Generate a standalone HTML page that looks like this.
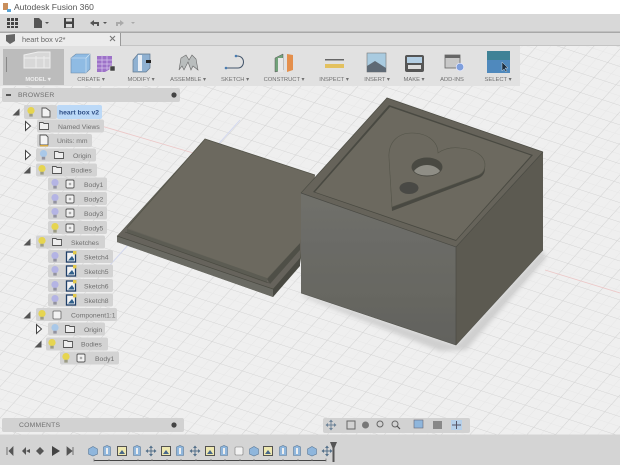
<!DOCTYPE html>
<html><head><meta charset="utf-8"><style>
html,body{margin:0;padding:0;width:620px;height:465px;overflow:hidden;background:#eee}
svg{display:block;font-family:"Liberation Sans",sans-serif;filter:blur(.35px)}
.r{fill:#d3d3d3}
.t{font-size:6.8px;fill:#707070}
.l{font-size:5.8px;fill:#707070;text-anchor:middle}
</style></head><body>
<svg width="620" height="465" viewBox="0 0 620 465" xmlns="http://www.w3.org/2000/svg">
<defs>
<pattern id="g" patternUnits="userSpaceOnUse" width="20" height="20" patternTransform="matrix(1.1 .36 .68 -.75 6 2)">
<path d="M10 0V20M0 10H20" stroke="#e6e6e6" stroke-width=".5" fill="none"/>
<path d="M0 0V20M0 0H20" stroke="#d2d2d2" stroke-width="1" fill="none"/>
</pattern>
<filter id="b"><feGaussianBlur stdDeviation="2.500"/></filter>
<filter id="s"><feGaussianBlur stdDeviation=".3"/></filter>
<linearGradient id="lf" x1="0" y1="0" x2="0" y2="1"><stop offset="0" stop-color="#70706b"/><stop offset="1" stop-color="#62625d"/></linearGradient>
<g id="on"><circle cx="0" cy="-1.4" r="3.600" fill="#e6d550"/><rect x="-1.700" y="1.800" width="3.400" height="2.800" fill="#9c9c84"/></g>
<g id="off"><circle cx="0" cy="-1.4" r="3.600" fill="#b4b4e4"/><rect x="-1.700" y="1.800" width="3.400" height="2.800" fill="#92929f"/></g>
<g id="dim"><circle cx="0" cy="-1.4" r="3.600" fill="#a9c8e8"/><rect x="-1.700" y="1.800" width="3.400" height="2.800" fill="#92929f"/></g>
<g id="fo"><path d="M-4.500 -3.500H-1L0 -2.500H4.500V3.500H-4.500Z" fill="#eee" stroke="#555" stroke-width=".9"/></g>
<g id="bo"><rect x="-4" y="-4" width="8" height="8" rx="1.200" fill="#f2f2f2" stroke="#555" stroke-width=".9"/><rect x="-1.200" y="-1.200" width="2.400" height="2.400" fill="#aaa"/></g>
<g id="sk"><rect x="-4.500" y="-5" width="9" height="10" fill="#f4f4f4" stroke="#1f3f68" stroke-width="1.300"/><path d="M-3 3.500L1 -1L3 2V3.500Z" fill="#2f5f8a"/><rect x="2" y="-6" width="3.400" height="3.400" fill="#e2c94a"/></g>
<path id="tri" d="M-3.500 3.500H3.500V-3.500Z" fill="#555"/>
<path id="op" d="M-2.500 -4.500L2.500 0L-2.500 4.500Z" fill="#fff" stroke="#444" stroke-width="1"/>
<g id="tb"><path d="M-3.500 -4L0 -5.500L3.500 -4V4.500H-3.500Z" fill="#8fb6dc" stroke="#5c7a99" stroke-width=".6"/><rect x="-1" y="-3" width="2" height="6" fill="#eee"/></g>
<g id="tm"><path d="M0 -5V5M-5 0H5" stroke="#54708a" stroke-width="1"/><path d="M0 -5.500L-2 -3H2ZM0 5.500L-2 3H2ZM-5.500 0L-3 -2V2ZM5.500 0L3 -2V2Z" fill="#54708a"/></g>
<g id="ts"><rect x="-4.500" y="-4.500" width="9" height="9" fill="#eee8b0" stroke="#444" stroke-width=".9"/><path d="M-3 3L0 -1L3 3Z" fill="#47678a"/></g>
<g id="tc"><path d="M-4.500 -2L0 -4.500L4.500 -2V3L0 5L-4.500 3Z" fill="#8fb6dc" stroke="#5c7a99" stroke-width=".6"/></g>
</defs>

<!-- canvas -->
<rect width="620" height="465" fill="#efefef"/>
<rect width="620" height="465" fill="url(#g)"/>
<path d="M30 105L200 155M545 270L620 293" stroke="#ecc8c8" stroke-width=".9" fill="none"/>
<path d="M110 265L240 120" stroke="#d0d6f0" stroke-width=".9" fill="none"/>

<!-- shadow -->
<path d="M304 297L440 351L466 350L546 258L543 250L456 345L301 293Z" fill="#cfcfcf" filter="url(#b)"/>

<!-- lid -->
<g filter="url(#s)">
<path d="M117 236L205 139L315 175L300 264L273 297L117 242Z" fill="#55554c"/>
<path d="M117 236L127 226L205 139L312 175L300 258L273 289Z" fill="#66645b"/>
<path d="M117 236V242L273 297V289Z" fill="#6b6b64"/>
<path d="M273 289V297L300 266V258Z" fill="#4a4a42"/>
<path d="M117 236L273 289" stroke="#4a4a42" stroke-width=".7" fill="none"/>
<path d="M127 229L267 278V283L127 233Z" fill="#5c5b52"/>
<path d="M125 232L269 283" stroke="#4a4a42" stroke-width=".6" fill="none"/>
<path d="M267 279L300 243V250L270 284Z" fill="#4f4f47"/>
<path d="M127 228L205 139L315 175L300 243L267 278Z" fill="#6c695e"/>
<path d="M127 228L205 139L315 175" stroke="#55554b" stroke-width=".8" fill="none"/>

<!-- box -->
<path d="M301 193L456 247V345L301 293Z" fill="url(#lf)"/>
<path d="M456 247L543 152V250L456 345Z" fill="#5c5a51"/>
<path d="M301 193L387 98L543 152L456 247Z" fill="#66645a"/>
<path d="M313 192L389 105L533 155L456 241Z" fill="#4a4a42"/>
<path d="M315 192L390 107L531 155.500L456 240Z" fill="#6c695e"/>
<path d="M301 193L387 98L543 152" stroke="#4f4f47" stroke-width=".8" fill="none"/>
<path d="M301 193L456 247L543 152M456 247V345" stroke="#4a4a44" stroke-width=".7" fill="none"/>
<path d="M301 293L456 345L543 250" stroke="#55554f" stroke-width=".6" fill="none"/>
<!-- heart -->
<path d="M392 211L389 158C388 142 398 133 412 133C428 133 438 142 438 153C445 148 452 147 460 148C475 149 485 156 485 168C485 173 483 176 479 178Z" fill="#4a4a42"/>
<path d="M392 207L389 158C388 142 398 133 412 133C428 133 438 142 438 153C445 148 452 147 460 148C475 149 485 156 485 165C485 170 483 173 479 175Z" fill="#6c695e" stroke="#55554b" stroke-width=".6"/>
<ellipse cx="427" cy="167" rx="15.500" ry="9.500" fill="#4a4a43"/>
<path d="M414 171C420 163 434 163 440 171C436 177 418 177 414 171Z" fill="#8f8e86"/>
<ellipse cx="409" cy="188" rx="9.500" ry="6" fill="#4a4a44"/>
</g>

<!-- title bar -->
<rect width="620" height="14" fill="#fff"/>
<path d="M3 3H8V10H3Z" fill="#c98f5c"/><path d="M7 9H11V12H7Z" fill="#5aa5d6"/>
<text x="14" y="10" font-size="8.500" fill="#555">Autodesk Fusion 360</text>

<!-- top bar -->
<rect y="14" width="620" height="18" fill="#d8d8d8"/>
<path d="M7 18h3v3h-3zM11 18h3v3h-3zM15 18h3v3h-3zM7 22h3v3h-3zM11 22h3v3h-3zM15 22h3v3h-3zM7 26h3v2h-3zM11 26h3v2h-3zM15 26h3v2h-3z" fill="#444"/>
<path d="M34 18H39L42 21V28H34Z" fill="#555"/><path d="M45 22H49L47 24Z" fill="#555"/>
<path d="M64 18H74V28H64Z" fill="#444"/><rect x="66" y="18.500" width="6" height="3" fill="#ddd"/><rect x="66" y="24" width="6" height="3.500" fill="#ddd"/>
<path d="M90 23L94 20V22H99V26H97V24H94V26Z" fill="#555"/><path d="M103 22H107L105 24Z" fill="#555"/>
<path d="M124 23L120 20V22H116V26H118V24H120V26Z" fill="#aaa"/><path d="M131 22H135L133 24Z" fill="#aaa"/>

<!-- tab row -->
<rect y="31.500" width="620" height="1.500" fill="#a8a8a8"/>
<rect y="33" width="620" height="13" fill="#dcdcdc"/>
<rect x="0" y="45" width="620" height="1" fill="#c4c4c4"/>
<rect y="33" width="120" height="13" fill="#ececec"/>
<rect x="120" y="33" width="1" height="13" fill="#999"/>
<path d="M6 35L15 34V41L10 44L6 41Z" fill="#666"/>
<text x="22" y="42" font-size="7.400" fill="#666">heart box v2*</text>
<path d="M110 36L115 41M115 36L110 41" stroke="#777" stroke-width="1.100"/>

<!-- ribbon -->
<rect y="46" width="520" height="40" fill="#e1e1e1"/>
<rect x="3" y="49" width="61" height="36" fill="#bcbcbc"/>
<rect x="6" y="57" width="1" height="15" fill="#888"/>
<path d="M24 55L38 52H50V68H24Z" fill="#d8d8d8" stroke="#eee"/>
<path d="M36 56V68M44 56V68M24 58H50" stroke="#eee" fill="none"/>
<text class="l" x="38" y="81" style="fill:#eee;font-weight:bold">MODEL ▾</text>

<path d="M71 58L76 54H90V69L86 73H71Z" fill="#8fbbe3" stroke="#6b8aa8" stroke-width=".6"/><path d="M71 58H86V73M86 58L90 54" stroke="#d7e8f5" stroke-width=".6" fill="none"/>
<text class="l" x="91" y="81">CREATE ▾</text>
<path d="M97 56H112V68L105 72H97Z" fill="#9d72c8"/><path d="M97 60H112M97 64H112M97 68H110M102 55V72M107 55V70" stroke="#d9c8ee" stroke-width=".7" fill="none"/>
<rect x="110" y="66" width="5" height="5" fill="#444" stroke="#eee" stroke-width=".5"/>

<path d="M133 60L138 54H150V68L146 72H133Z" fill="#8fb1d2" stroke="#61788f" stroke-width=".7"/><rect x="138" y="55" width="4" height="16" fill="#e8eef5"/><rect x="146" y="60" width="5" height="3" fill="#222"/>
<text class="l" x="141" y="81">MODIFY ▾</text>

<path d="M179 70L181 58L186 55L189 60L192 55L196 59L198 70L193 66L191 70L188 62L184 70L182 66Z" fill="#b9bdbd" stroke="#666" stroke-width=".6"/>
<text class="l" x="188" y="81">ASSEMBLE ▾</text>

<path d="M226 68H238C245 68 246 56 237 56" stroke="#44556a" stroke-width="1" fill="none"/><circle cx="226" cy="68" r="1.300" fill="#4a7cb0"/><circle cx="236" cy="56" r="1.300" fill="#4a7cb0"/>
<text class="l" x="235" y="81">SKETCH ▾</text>

<path d="M275 58L283 54V70L275 72Z" fill="#72a27a" stroke="#555" stroke-width=".5"/><path d="M278 58H283V72H278Z" fill="#e8e8e8"/><path d="M287 54L293 55V70L287 72Z" fill="#e48f4c"/>
<text class="l" x="284" y="81">CONSTRUCT ▾</text>

<rect x="325" y="59" width="19" height="1.500" fill="#666"/><rect x="325" y="64" width="19" height="4" fill="#e3c15f"/>
<text class="l" x="334" y="81">INSPECT ▾</text>

<rect x="367" y="53" width="19" height="19" fill="#a9cbe0" stroke="#777" stroke-width=".6"/><path d="M367 72V66L375 61L386 68V72Z" fill="#5f6a75"/>
<text class="l" x="377" y="81">INSERT ▾</text>

<rect x="405" y="55" width="19" height="17" rx="2" fill="#555"/><rect x="407" y="57" width="15" height="6" fill="#b4cfe4"/><rect x="408" y="65" width="13" height="4" fill="#ddd"/>
<text class="l" x="414" y="81">MAKE ▾</text>

<rect x="445" y="55" width="15" height="13" fill="#c8c8c8" stroke="#666" stroke-width=".8"/><rect x="445" y="55" width="15" height="3" fill="#666"/><circle cx="460" cy="67" r="3.800" fill="#7f9fdc" stroke="#eef" stroke-width=".7"/>
<text class="l" x="452" y="81">ADD-INS</text>

<rect x="487" y="51" width="23" height="22" fill="#4f89bd"/><rect x="487" y="51" width="23" height="9" fill="#3f8296"/><path d="M502 62V71L504 69L506 72L507 71L505 68H508Z" fill="#1b2d3f" stroke="#e5eef5" stroke-width=".4"/>
<text class="l" x="498" y="81">SELECT ▾</text>

<!-- browser header -->
<rect x="2" y="88" width="178" height="14" rx="2" fill="#d2d2d2"/>
<rect x="6" y="94" width="5" height="2" fill="#555"/>
<text class="t" x="18" y="97" letter-spacing=".2">BROWSER</text>
<circle cx="174" cy="95" r="2.600" fill="#444"/>

<!-- tree rows -->
<rect class="r" x="24" y="105" width="33" height="14" rx="2"/><rect x="57" y="105" width="45" height="14" rx="2" fill="#bcd9f7"/>
<use href="#tri" x="16" y="112"/><use href="#on" x="31" y="112"/>
<path d="M42 108H46L50 111V117H42Z" fill="#f2f2f2" stroke="#555" stroke-width=".9"/>
<text x="59" y="114.500" font-size="6.800" font-weight="bold" fill="#2f4f86">heart box v2</text>

<rect class="r" x="37" y="119.500" width="67" height="13" rx="2"/><use href="#op" x="28" y="126"/><use href="#fo" x="44" y="126"/><text class="t" x="58" y="129">Named Views</text>
<rect class="r" x="37" y="134" width="55" height="13" rx="2"/><path d="M40 135H46L48 137V145H40Z" fill="#f4f4f4" stroke="#555" stroke-width=".9"/><rect x="40" y="145" width="8" height="1.400" fill="#d9a93e"/><text class="t" x="57" y="143">Units: mm</text>

<rect class="r" x="36" y="148.500" width="60" height="13" rx="2"/><use href="#op" x="28" y="155"/><use href="#dim" x="43.500" y="155"/><use href="#fo" x="59" y="155"/><text class="t" x="73" y="158">Origin</text>
<rect class="r" x="36" y="163.500" width="61" height="13" rx="2"/><use href="#tri" x="27" y="170"/><use href="#on" x="42" y="170"/><use href="#fo" x="57" y="170"/><text class="t" x="71" y="172.500">Bodies</text>

<rect class="r" x="48" y="177.500" width="59" height="13" rx="2"/><use href="#off" x="55" y="184"/><use href="#bo" x="70" y="184"/><text class="t" x="84" y="187">Body1</text>
<rect class="r" x="48" y="192" width="59" height="13" rx="2"/><use href="#off" x="55" y="199"/><use href="#bo" x="70" y="199"/><text class="t" x="84" y="201.500">Body2</text>
<rect class="r" x="48" y="206.500" width="59" height="13" rx="2"/><use href="#off" x="55" y="213"/><use href="#bo" x="70" y="213"/><text class="t" x="84" y="216">Body3</text>
<rect class="r" x="48" y="221" width="59" height="13" rx="2"/><use href="#on" x="55" y="228"/><use href="#bo" x="70" y="228"/><text class="t" x="84" y="230.500">Body5</text>

<rect class="r" x="36" y="235.500" width="69" height="13" rx="2"/><use href="#tri" x="27" y="242"/><use href="#on" x="42" y="242"/><use href="#fo" x="57" y="242"/><text class="t" x="71" y="245">Sketches</text>

<rect class="r" x="48" y="250" width="65" height="13" rx="2"/><use href="#off" x="55" y="257"/><use href="#sk" x="71" y="257"/><text class="t" x="84" y="259.500">Sketch4</text>
<rect class="r" x="48" y="264.500" width="65" height="13" rx="2"/><use href="#off" x="55" y="271"/><use href="#sk" x="71" y="271"/><text class="t" x="84" y="274">Sketch5</text>
<rect class="r" x="48" y="279" width="65" height="13" rx="2"/><use href="#off" x="55" y="286"/><use href="#sk" x="71" y="286"/><text class="t" x="84" y="288.500">Sketch6</text>
<rect class="r" x="48" y="293.500" width="65" height="13" rx="2"/><use href="#off" x="55" y="300"/><use href="#sk" x="71" y="300"/><text class="t" x="84" y="303">Sketch8</text>

<rect class="r" x="36" y="308" width="81" height="13" rx="2"/><use href="#tri" x="27" y="315"/><use href="#on" x="42" y="315"/><rect x="53" y="311" width="8" height="8" rx="1" fill="#f2f2f2" stroke="#666" stroke-width=".8"/><text class="t" x="71" y="317.500">Component1:1</text>

<rect class="r" x="48" y="322.500" width="57" height="13" rx="2"/><use href="#op" x="39" y="329"/><use href="#dim" x="55" y="329"/><use href="#fo" x="70" y="329"/><text class="t" x="84" y="332">Origin</text>
<rect class="r" x="46" y="337.500" width="62" height="13" rx="2"/><use href="#tri" x="38" y="344"/><use href="#on" x="52" y="344"/><use href="#fo" x="68" y="344"/><text class="t" x="81" y="346.500">Bodies</text>
<rect class="r" x="60" y="351.500" width="59" height="13" rx="2"/><use href="#on" x="66" y="358"/><use href="#bo" x="81" y="358"/><text class="t" x="95" y="361">Body1</text>

<!-- comments -->
<rect x="2" y="418" width="182" height="14" rx="2" fill="#d2d2d2"/>
<text class="t" x="19" y="427" letter-spacing=".2">COMMENTS</text>
<circle cx="174" cy="425" r="2.600" fill="#444"/>

<!-- nav bar -->
<rect x="323" y="418" width="147" height="15" rx="2" fill="#d2d2d2"/>
<use href="#tm" x="331" y="425" style="opacity:.8"/>
<rect x="347" y="421" width="8" height="8" fill="none" stroke="#666"/>
<circle cx="365.500" cy="425" r="3.500" fill="#777"/>
<circle cx="380" cy="424" r="3" fill="none" stroke="#666"/><circle cx="395" cy="424" r="3" fill="none" stroke="#666"/><path d="M397 426L400 429" stroke="#555" stroke-width="1.200"/>
<rect x="414" y="420" width="9" height="8" fill="#8fb6dc" stroke="#667"  stroke-width=".6"/>
<rect x="433" y="421" width="9" height="8" fill="#888"/>
<rect x="451" y="420" width="11" height="10" fill="#b6d0ea"/><path d="M456.500 421V429M452 425H461" stroke="#556"/>

<!-- timeline -->
<rect y="434.500" width="620" height="30.500" fill="#d4d4d4"/>
<path d="M7 447V455M9 451L13 447V455Z" fill="#555" stroke="#555" stroke-width=".8"/>
<path d="M22 451L26 447V455ZM26 451L30 449V453Z" fill="#555"/>
<path d="M36 451L40 447V455ZM40 447L44 451L40 455Z" fill="#555"/>
<path d="M52 446L60 451L52 456Z" fill="#444"/>
<path d="M67 447L72 451L67 455ZM73 447V455" fill="#555" stroke="#555" stroke-width=".8"/>
<use href="#tc" x="93" y="451"/><use href="#tb" x="107" y="451"/><use href="#ts" x="122" y="451"/><use href="#tb" x="137" y="451"/><use href="#tm" x="151" y="451"/><use href="#ts" x="166" y="451"/><use href="#tb" x="180" y="451"/><use href="#tm" x="195" y="451"/><use href="#ts" x="210" y="451"/><use href="#tb" x="224" y="451"/>
<rect x="235" y="447" width="8" height="8" rx="1" fill="#f2f2f2" stroke="#777" stroke-width=".6"/>
<use href="#tc" x="254" y="451"/><use href="#ts" x="268" y="451"/><use href="#tb" x="283" y="451"/><use href="#tb" x="297" y="451"/><use href="#tc" x="312" y="451"/><use href="#tm" x="327" y="451"/>
<path d="M94 460.500H326" stroke="#444" stroke-width=".9"/>
<path d="M94 458.500v3M109 459v2M123 459v2M138 459v2M152 459v2M167 459v2M181 459v2M196 459v2M211 459v2M225 459v2M240 459v2M254 459v2M269 459v2M283 459v2M298 459v2M312 459v2M326 458.500v3" stroke="#777" stroke-width=".8"/>
<path d="M330 442H337L334.500 448V462H332.500V448Z" fill="#555"/>
</svg>
</body></html>
